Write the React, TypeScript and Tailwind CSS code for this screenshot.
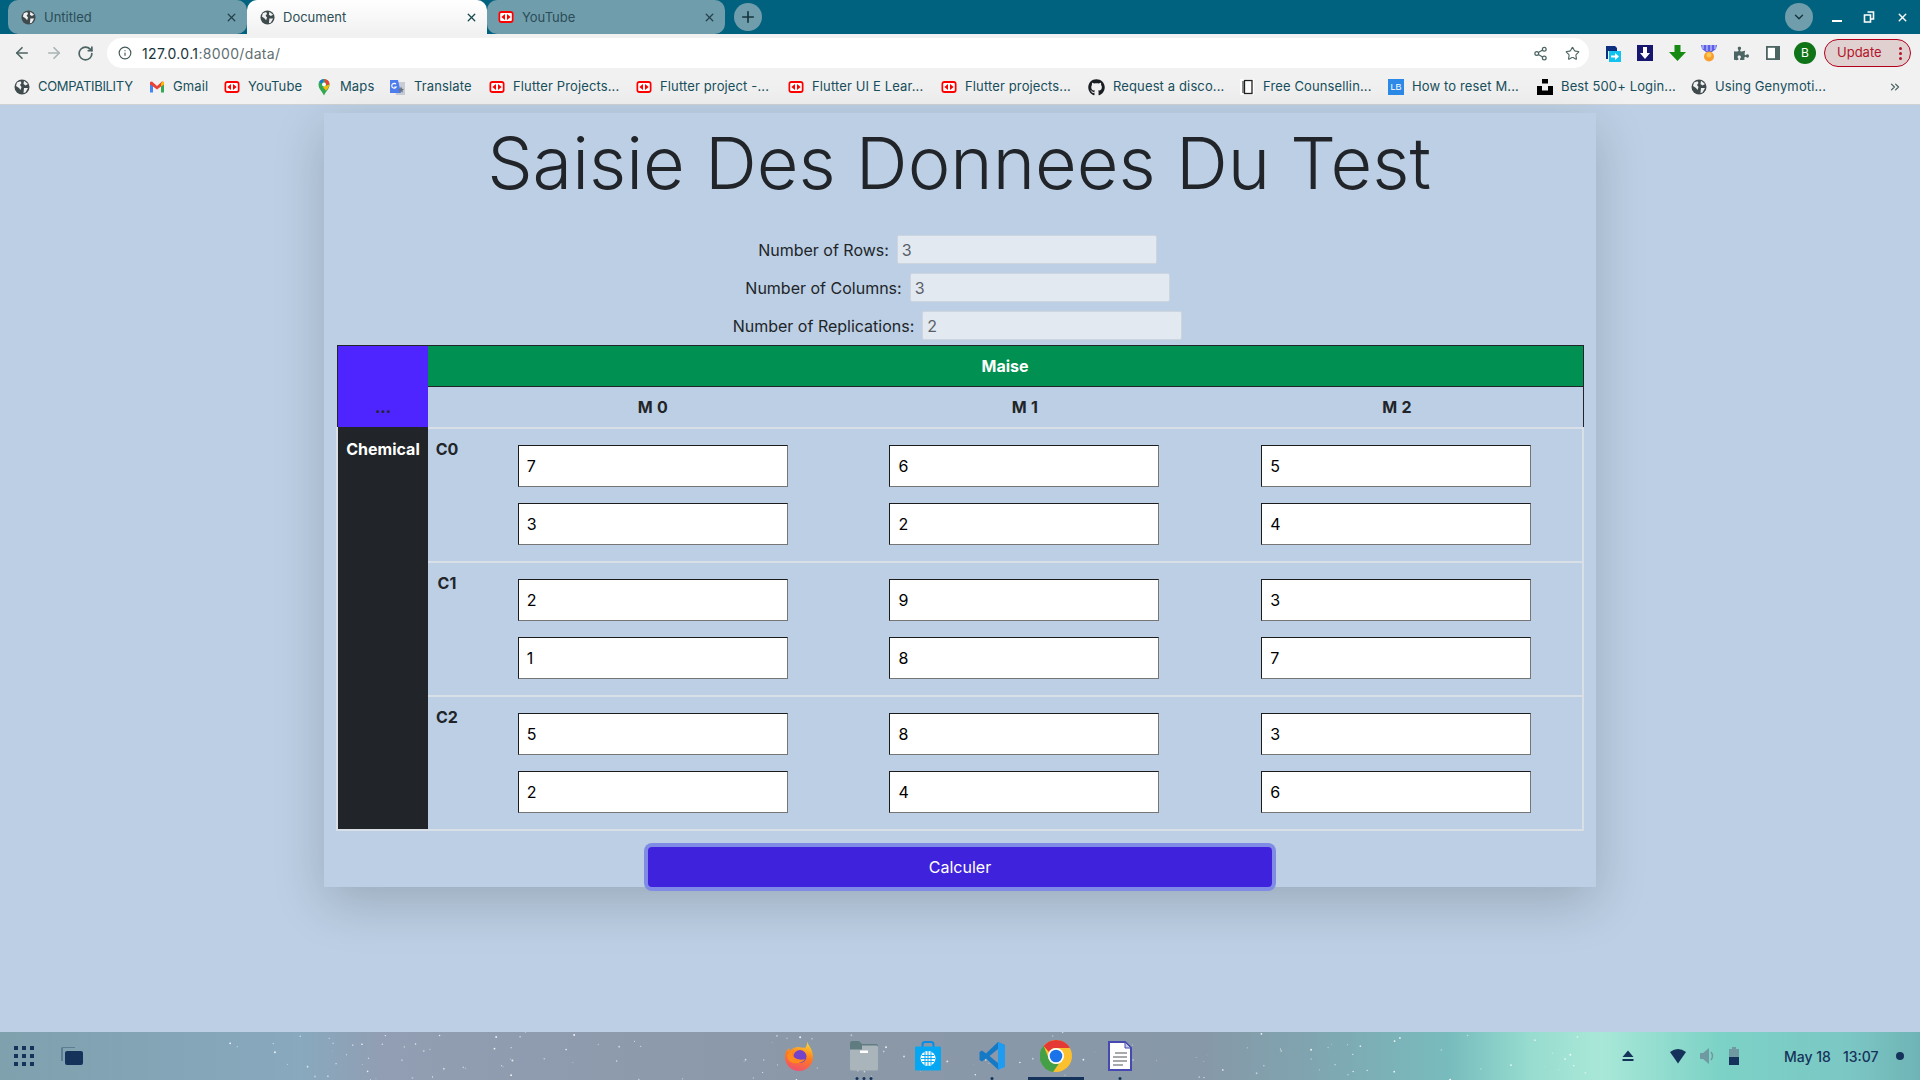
import React from "react";
import { ArrowLeft, ArrowRight, RotateCw, Info, Share2, Star, Plus, X, ChevronDown, ChevronsRight } from "lucide-react";
import { FaGithub, FaPuzzlePiece } from "react-icons/fa";

const Globe = ({ s = 16 }: { s?: number }) => (
  <svg width={s} height={s} viewBox="0 0 16 16" className="shrink-0">
    <circle cx="8" cy="8" r="7.5" fill="#3f4a4c" />
    <path d="M3 3.5 6.5 2.2 7.5 4 6 6 7.5 8 6.5 11 5 9 2 7ZM10 1.8 14 5 11.5 6.5 9.5 5ZM10 9h4l-2.5 4.5-2 .5Z" fill="#f1f1f1" />
  </svg>
);

const Yt = () => (
  <svg width="16" height="16" viewBox="0 0 16 16" className="shrink-0">
    <rect x="0.5" y="2" width="15" height="12" rx="3" fill="#f00" />
    <rect x="2.2" y="4" width="11.6" height="8" rx="1" fill="#fff" />
    <path d="M3.4 8 7 5V11ZM12.6 8 9 5V11Z" fill="#f00" />
  </svg>
);

const Gmail = () => (
  <svg width="16" height="16" viewBox="0 0 16 16" className="shrink-0">
    <path d="M1 3.5 V13.5 H4 V7Z" fill="#4285f4" />
    <path d="M15 3.5 V13.5 H12 V7Z" fill="#34a853" />
    <path d="M1 3 3 2.5 8 7 13 2.5 15 3 15 5.5 12 7.5 8 10.5 4 7.5 1 5.5Z" fill="#ea4335" />
    <path d="M12 4.4 13.4 2.6 15 3.2 15 5.5 12 7.5Z" fill="#fbbc04" />
  </svg>
);

const MapsPin = () => (
  <svg width="16" height="18" viewBox="0 0 16 18" className="shrink-0">
    <path d="M8 17.5C6 13 2.5 11 2.5 6.5A5.5 5.5 0 0 1 8 1 5.5 5.5 0 0 1 13.5 6.5C13.5 11 10 13 8 17.5Z" fill="#34a853" />
    <path d="M3.4 3.5A5.5 5.5 0 0 1 8 1L6 6Z" fill="#1a73e8" />
    <path d="M8 1A5.5 5.5 0 0 1 13.5 6.5L10 7Z" fill="#ea4335" />
    <path d="M13.4 6.5C13.2 9 11.5 10.8 10 12.7L7 9Z" fill="#fbbc04" />
    <circle cx="8" cy="6.5" r="2" fill="#fff" />
  </svg>
);

const Translate = () => (
  <svg width="17" height="17" viewBox="0 0 17 17" className="shrink-0">
    <path d="M5 3h11v13H7Z" fill="#c9ced6" />
    <path d="M1 1h8l3 13H1Z" fill="#4f7ef0" />
    <path d="M12 7.5l1 2.3 2 .3-1.5 1.4.4 2.1-1.9-1-1.9 1 .4-2.1L9 10.1l2-.3Z" fill="#6b7684" />
    <path d="M7 5.2A2.4 2.4 0 1 0 7.2 8H5.4" stroke="#fff" strokeWidth="1.1" fill="none" />
  </svg>
);

const FreeIcon = () => (
  <svg width="16" height="16" viewBox="0 0 16 16" className="shrink-0">
    <rect x="1" y="0" width="14" height="16" fill="#fff" />
    <rect x="3" y="2" width="3" height="12" fill="#8a8f91" />
    <rect x="5.5" y="1.5" width="7.5" height="13" fill="#fff" stroke="#222" strokeWidth="1.3" />
  </svg>
);

const Unsplash = () => (
  <svg width="16" height="16" viewBox="0 0 16 16" className="shrink-0">
    <path d="M5 0h6v4.5H5ZM0 7h5v4.5h6V7h5v9H0Z" fill="#000" />
  </svg>
);

const Lb = () => (
  <div className="w-4 h-4 shrink-0 bg-[#2d8ae8] text-white text-[9px] leading-4 text-center font-['Liberation_Sans',sans-serif]">LB</div>
);

const bookmarks: [React.ReactNode, string, string][] = [
  [<Globe />, "COMPATIBILITY", "w-[135px]"],
  [<Gmail />, "Gmail", "w-[75px]"],
  [<Yt />, "YouTube", "w-[92px]"],
  [<MapsPin />, "Maps", "w-[73px]"],
  [<Translate />, "Translate", "w-[100px]"],
  [<Yt />, "Flutter Projects...", "w-[147px]"],
  [<Yt />, "Flutter project -...", "w-[152px]"],
  [<Yt />, "Flutter UI E Lear...", "w-[153px]"],
  [<Yt />, "Flutter projects...", "w-[147px]"],
  [<FaGithub size={17} color="#1b1f23" className="shrink-0" />, "Request a disco...", "w-[151px]"],
  [<FreeIcon />, "Free Counsellin...", "w-[149px]"],
  [<Lb />, "How to reset M...", "w-[149px]"],
  [<Unsplash />, "Best 500+ Login...", "w-[154px]"],
  [<Globe />, "Using Genymoti...", "w-[150px]"],
];

const Tab = ({ icon, title, w, pad, active }: { icon: React.ReactNode; title: string; w: string; pad: string; active?: boolean }) => (
  <div
    className={`${w} ${pad} h-[34px] flex items-center pr-[9px] gap-[8px] text-[13px] ${
      active ? "bg-[linear-gradient(#ffffff,#f1f1f1)] rounded-t-[10px] text-[#2c4f55]" : "bg-[#6f9dab] rounded-[10px] text-[#2b4d58]"
    }`}
  >
    {icon}
    <span className="flex-1 truncate pt-[1px]">{title}</span>
    <X size={13} strokeWidth={2.4} color={active ? "#14474c" : "#24424c"} />
  </div>
);

const ExtArrowBlue = () => (
  <svg width="16" height="17" viewBox="0 0 16 17">
    <path d="M1 1h9l2 2v3H3v8H1Z" fill="#0d2f80" />
    <rect x="4" y="6" width="12" height="11" fill="#12c3ef" />
    <path d="M6 10.5h4V8l4 3.500-4 3.500v-2.500H6Z" fill="#fff" />
  </svg>
);
const ExtDown = () => (
  <svg width="16" height="16" viewBox="0 0 16 16">
    <rect width="16" height="16" fill="#17176f" />
    <path d="M6 2h4v6h3l-5 6-5-6h3Z" fill="#fff" />
  </svg>
);
const GreenDown = () => (
  <svg width="17" height="16" viewBox="0 0 17 16">
    <path d="M5.500 0h6v7H17l-8.500 9L0 7h5.500Z" fill="#168a12" />
  </svg>
);
const Medal = () => (
  <svg width="16" height="17" viewBox="0 0 16 17">
    <path d="M0 0h16l-1 4-4 3H5L1 4Z" fill="#5b5fe8" />
    <path d="M2 0v4M14 0v4M6 0v6M10 0v6" stroke="#c5c8f7" strokeWidth="1.2" />
    <circle cx="8" cy="11.500" r="5" fill="#fb9d2d" />
    <circle cx="8" cy="10" r="2.500" fill="#fcc957" />
  </svg>
);
const SidePanel = () => (
  <svg width="14" height="14" viewBox="0 0 14 14">
    <rect x="0.900" y="0.900" width="12.200" height="12.200" fill="#fff" stroke="#4c6562" strokeWidth="1.800" />
    <rect x="9" y="1" width="4" height="12" fill="#4c6562" />
  </svg>
);

const Firefox = () => (
  <svg width="30" height="30" viewBox="0 0 30 30" className="-translate-x-[1px]">
    <defs>
      <linearGradient id="ffa" x1="0.700" y1="0" x2="0.400" y2="1">
        <stop offset="0" stopColor="#fdd835" />
        <stop offset="0.500" stopColor="#ff7b1c" />
        <stop offset="1" stopColor="#f0506e" />
      </linearGradient>
    </defs>
    <path d="M23 0.500C25 6 29 8 29 16A14 14 0 0 1 1 16C1 12 2.500 9 5 7L6 10C8 7 12 6 14 6 17 6 20.500 7.500 21.500 6.500 22.500 5 23.500 3 23 0.500Z" fill="url(#ffa)" />
    <circle cx="16" cy="15.500" r="6.500" fill="#7543c9" />
    <path d="M3 14C5 10 8 8.500 12 9.500 9 10 8 12 8.500 14 10 17.500 16 20 21 18 18 23 10 23.500 6 20.500 4 19 3 16 3 14Z" fill="#ff8a1d" />
  </svg>
);
const Folder = () => (
  <svg width="30" height="30" viewBox="0 0 30 30">
    <path d="M1 2Q1 0 3 0h7l3 3h14q2 0 2 2v5H1Z" fill="#5f7c80" />
    <rect x="1" y="4.500" width="28" height="25" rx="1.500" fill="#a9b5ba" />
    <rect x="1" y="3.500" width="12" height="5" fill="#5f7c80" />
    <rect x="11" y="9.500" width="8" height="2.500" fill="#fff" />
  </svg>
);
const Store = () => (
  <svg width="30" height="30" viewBox="0 0 30 30">
    <path d="M9.500 7V3.500Q9.500 1 12 1h6q2.500 0 2.500 2.500V7" fill="none" stroke="#0c8be0" strokeWidth="2" />
    <rect x="2" y="5.500" width="26" height="24" rx="1" fill="#06a7f2" />
    <circle cx="15" cy="17.500" r="7.500" fill="#fff" />
    <path d="M9 14.500h12M8 17.500h14M9 20.500h12M12 11v13M15 10v15M18 11v13" stroke="#06a7f2" strokeWidth="1" />
  </svg>
);
const VSCode = () => (
  <svg width="30" height="30" viewBox="0 0 30 30">
    <path d="M21 1 28.200 4.200 21.500 29 9 17.500 5 20.500 2.500 19V11L5 9.500 9 12.500Z" fill="#0f78c7" opacity="0.950" />
    <path d="M21 8 12.500 15 21 22Z" fill="#8b98a8" />
    <path d="M21 1 28 4V26L21 29Z" fill="#1f9cf0" />
  </svg>
);
const ChromeIcon = () => (
  <svg width="32" height="32" viewBox="0 0 32 32">
    <circle cx="16" cy="16" r="16" fill="#fbc02d" />
    <path d="M16 0A16 16 0 0 1 29.900 8H16A8 8 0 0 0 9 12L3.600 6A16 16 0 0 1 16 0Z" fill="#e53935" />
    <path d="M3.600 5.700 9.300 20A8 8 0 0 0 19 23.500L13 32A16 16 0 0 1 3.600 5.700Z" fill="#43a047" />
    <circle cx="16" cy="16" r="8" fill="#fff" />
    <circle cx="16" cy="16" r="6.300" fill="#1a73e8" />
  </svg>
);
const WriterDoc = () => (
  <svg width="24" height="30" viewBox="0 0 24 30">
    <path d="M1 1h16l6 6v22H1Z" fill="#fff" stroke="#4549b0" strokeWidth="2" />
    <path d="M17 1l6 6h-6Z" fill="#c6c8e8" stroke="#4549b0" strokeWidth="1" />
    <path d="M7 12h12M5 16h14M5 20h14M5 24h10" stroke="#8a8d93" strokeWidth="1.400" />
  </svg>
);

const Stars = () => {
  const items: { x: number; y: number; r: number; o: number }[] = [];
  let seed = 17;
  const next = () => {
    seed = (seed * 16807) % 2147483647;
    return seed / 2147483647;
  };
  for (let i = 0; i < 140; i++) {
    items.push({ x: 230 + next() * 1360, y: next() * 48, r: 0.4 + next() * 0.6, o: 0.4 + next() * 0.6 });
  }
  return (
    <svg width="1920" height="48" className="absolute left-0 top-0 pointer-events-none">
      {items.map((s, i) => (
        <circle key={i} cx={s.x} cy={s.y} r={s.r} fill="#fff" opacity={s.o} />
      ))}
    </svg>
  );
};

const InfoInput = ({ label, value }: { label: string; value: string }) => (
  <div className="h-[29px] flex items-center justify-center gap-2 pr-[5px] text-[16px] text-[#212529]">
    <span>{label}</span>
    <input
      readOnly
      defaultValue={value}
      className="w-[260px] h-[29px] bg-[#e3e9f1] border border-[#cdd5de] rounded-[2px] pl-1 text-[16px] text-[#5a6068] outline-none"
    />
  </div>
);

const Cell = ({ v }: { v: string }) => (
  <input
    readOnly
    defaultValue={v}
    className="w-[270px] h-[42px] bg-white border border-t-[#1c1c1c] border-l-[#1c1c1c] border-r-[#767676] border-b-[#767676] pl-2 text-[16px] text-black outline-none"
  />
);

const rows: { name: string; cols: [string, string][] }[] = [
  { name: "C0", cols: [["7", "3"], ["6", "2"], ["5", "4"]] },
  { name: "C1", cols: [["2", "1"], ["9", "8"], ["3", "7"]] },
  { name: "C2", cols: [["5", "2"], ["8", "4"], ["3", "6"]] },
];

export default function App() {
  return (
    <div className="w-[1920px] h-[1080px] overflow-hidden flex flex-col bg-[#bccfe4] font-['Inter',sans-serif]">
      {/* tab strip */}
      <div className="h-[34px] shrink-0 bg-[#00627f] flex items-center pl-2">
        <Tab w="w-[239px]" pad="pl-[13px]" title="Untitled" icon={<Globe s={15} />} />
        <Tab w="w-[240px]" pad="pl-[13px]" title="Document" icon={<Globe s={15} />} active />
        <Tab w="w-[238px]" pad="pl-[11px]" title="YouTube" icon={<Yt />} />
        <div className="ml-[9px] w-[28px] h-[28px] rounded-full bg-[#6f9dab] flex items-center justify-center">
          <Plus size={18} strokeWidth={2.2} color="#16343c" />
        </div>
        <div className="ml-auto w-[28px] h-[28px] rounded-full bg-[#6f9dab] flex items-center justify-center mr-[9px]">
          <ChevronDown size={14} strokeWidth={2.4} color="#16343c" />
        </div>
        <div className="w-[98px] flex items-center justify-between pl-[10px] pr-[11px] text-white">
          <div className="w-[10px] h-[2px] bg-white mt-[7px]" />
          <svg width="12" height="12" viewBox="0 0 12 12">
            <path d="M4.500 1h6v7h-2.500M1.500 4h6v7h-6Z" stroke="#fff" strokeWidth="1.600" fill="none" />
          </svg>
          <X size={13} strokeWidth={2.6} color="#fff" />
        </div>
      </div>

      {/* toolbar */}
      <div className="h-[34px] shrink-0 bg-[#f1f1f1] flex items-start pt-1 pl-[13px]">
        <div className="h-[30px] flex items-center gap-[14px] text-[#4c6562]">
          <ArrowLeft size={18} strokeWidth={2.200} />
          <ArrowRight size={18} strokeWidth={2.200} color="#a9b4b3" />
          <RotateCw size={17} strokeWidth={2.400} />
        </div>
        <div className="ml-[13px] w-[1482px] h-[30px] bg-white rounded-full flex items-center pl-[11px] pr-[9px] text-[14px] tracking-[0.35px]">
          <Info size={14} strokeWidth={2} color="#425a58" />
          <span className="ml-[10px] text-[#17343a]">127.0.0.1</span>
          <span className="text-[#5f6f72]">:8000/data/</span>
          <Share2 size={15} strokeWidth={2} color="#4c6562" className="ml-auto" />
          <Star size={15} strokeWidth={1.800} color="#4c6562" className="ml-[17px]" />
        </div>
        <div className="h-[30px] flex items-center ml-[8px]">
          <div className="w-[32px] flex justify-center"><ExtArrowBlue /></div>
          <div className="w-[32px] flex justify-center"><ExtDown /></div>
          <div className="w-[32px] flex justify-center"><GreenDown /></div>
          <div className="w-[32px] flex justify-center"><Medal /></div>
          <div className="w-[32px] flex justify-center"><FaPuzzlePiece size={15} color="#4c6562" /></div>
          <div className="w-[32px] flex justify-center"><SidePanel /></div>
          <div className="w-[32px] flex justify-center">
            <div className="w-[22px] h-[22px] rounded-full bg-[#0f7417] text-white text-[12px] flex items-center justify-center">B</div>
          </div>
          <div className="ml-[3px] w-[87px] h-[28px] rounded-full border border-[#b3001b] bg-[#e0d0d0] flex items-center justify-between pl-[12px] pr-[8px] text-[13px] text-[#b3142a]">
            <span>Update</span>
            <span className="flex flex-col gap-[2px]">
              <i className="block w-[3px] h-[3px] rounded-full bg-[#b3142a]" />
              <i className="block w-[3px] h-[3px] rounded-full bg-[#b3142a]" />
              <i className="block w-[3px] h-[3px] rounded-full bg-[#b3142a]" />
            </span>
          </div>
        </div>
      </div>

      {/* bookmarks */}
      <div className="h-[37px] shrink-0 bg-[#f1f1f1] border-b border-[#cfd2d4] flex items-center pl-[14px] pt-[3px] pb-[1px] text-[13px] text-[#174f5c]">
        {bookmarks.map(([icon, label, w], i) => (
          <div key={i} className={`${w} shrink-0 flex items-center gap-[8px] whitespace-nowrap`}>
            {icon}
            <span className={i === 0 ? "tracking-[-0.3px]" : "tracking-[0.13px]"}>{label}</span>
          </div>
        ))}
        <ChevronsRight size={14} strokeWidth={2.200} color="#4c6562" className="ml-[47px]" />
      </div>

      {/* page */}
      <div className="flex-1 min-h-0 pt-[8px]">
        <div className="relative mx-auto w-[1272px] h-[774px] bg-[#bccfe4] shadow-[0_16px_48px_rgba(0,0,0,0.175)] flex flex-col">
          <h1 className="h-[101px] flex items-center justify-center pr-[2px] text-[72px] font-light text-[#212529] leading-none">
            Saisie Des Donnees Du Test
          </h1>
          <div className="mt-[22px] flex flex-col gap-[9px]">
            <InfoInput label="Number of Rows:" value="3" />
            <InfoInput label="Number of Columns:" value="3" />
            <InfoInput label="Number of Replications:" value="2" />
          </div>

          {/* table */}
          <div className="mt-[5px] ml-[12px] w-[1248px]">
            <div className="flex h-[82px] pl-[1px]">
              <div className="w-[91px] bg-[#4f25ff] border-t border-l border-[#212529] flex items-end justify-center pb-[8px] font-bold text-[16px] leading-6 text-[#212529]">
                ...
              </div>
              <div className="flex-1 flex flex-col">
                <div className="h-[42px] bg-[#009152] border-t border-r border-b border-[#212529] flex items-center justify-center pr-[1px] text-white font-bold text-[16px]">
                  Maise
                </div>
                <div className="h-[40px] border-r border-[#212529] flex pl-[39px] font-bold text-[16px] text-[#212529]">
                  {["M 0", "M 1", "M 2"].map((m) => (
                    <div key={m} className="w-[372px] flex items-center justify-center tracking-[0.3px]">
                      {m}
                    </div>
                  ))}
                </div>
              </div>
            </div>
            <div className="flex border-x-2 border-b-2 border-[#d9dfe6]">
              <div className="w-[90px] shrink-0 bg-[#212529] pt-[10px] text-center text-white font-bold text-[16px] leading-6">
                Chemical
              </div>
              <div className="flex-1 min-w-0">
                {rows.map((r) => (
                  <div key={r.name} className="h-[134px] border-t-2 border-[#d9dfe6] flex">
                    <div className="w-[39px] pt-2 pr-[1px] text-center font-bold text-[16px] leading-6 text-[#212529]">{r.name}</div>
                    {r.cols.map((c, i) => (
                      <div key={i} className="w-[372px] flex flex-col items-center justify-center gap-4">
                        <Cell v={c[0]} />
                        <Cell v={c[1]} />
                      </div>
                    ))}
                  </div>
                ))}
              </div>
            </div>
          </div>

          <button className="mt-[16px] mx-auto w-[624px] h-[40px] rounded-[4px] bg-[#3f22dc] text-white text-[16px] ring-4 ring-[#7f8be4]">
            Calculer
          </button>
        </div>
      </div>

      {/* taskbar */}
      <div className="relative h-[48px] shrink-0 flex items-center text-[#15335a] bg-[linear-gradient(90deg,#7fa0ad_0px,#88a9be_300px,#919eb3_380px,#8b98a8_800px,#8798a8_1200px,#80a3af_1300px,#78bcbe_1450px,#97dccf_1530px,#a9e8d8_1600px,#7cd2c6_1720px,#7bc7c4_1850px,#6fb3b6_1920px)]">
        <Stars />
        <div className="relative w-[768px] h-full flex items-center pl-[14px]">
          <div className="grid grid-cols-3 gap-x-[4px] gap-y-[4px] w-[20px]">
            {Array.from({ length: 9 }).map((_, i) => (
              <i key={i} className="block w-[4px] h-[4px] bg-[#15335a]" />
            ))}
          </div>
          <svg width="22" height="18" viewBox="0 0 22 18" className="ml-[27px]">
            <path d="M0 4V1.500Q0 0 1.500 0H14V1H2V14H0Z" fill="#5d7d93" />
            <rect x="4" y="4" width="18" height="14" rx="2" fill="#15335a" />
          </svg>
        </div>
        {[<Firefox />, <Folder />, <Store />, <VSCode />, <ChromeIcon />, <WriterDoc />].map((ic, i) => (
          <div key={i} className="relative w-[64px] h-full flex items-center justify-center">
            {ic}
            {i === 1 && (
              <div className="absolute bottom-[0px] left-1/2 -translate-x-1/2 flex gap-[4px]">
                <i className="block w-[3px] h-[3px] rounded-full bg-[#15335a]" />
                <i className="block w-[3px] h-[3px] rounded-full bg-[#15335a]" />
                <i className="block w-[3px] h-[3px] rounded-full bg-[#15335a]" />
              </div>
            )}
            {(i === 3 || i === 5) && (
              <i className="absolute bottom-0 left-1/2 -translate-x-1/2 block w-[3px] h-[3px] rounded-full bg-[#15335a]" />
            )}
            {i === 4 && <i className="absolute bottom-0 left-[4px] block w-[56px] h-[3px] bg-[#15335a]" />}
          </div>
        ))}
        <div className="relative flex-1 h-full flex items-center pl-[470px]">
          <svg width="12" height="12" viewBox="0 0 12 12" className="shrink-0">
            <path d="M6 0.500 11.500 7H0.500ZM0.500 9H11.500V11H0.500Z" fill="#15335a" />
          </svg>
          <svg width="18" height="16" viewBox="0 0 18 16" className="ml-[35px] shrink-0">
            <path d="M1 4Q9-2 17 4L9 15.500Z" fill="#15335a" />
          </svg>
          <svg width="16" height="18" viewBox="0 0 16 18" className="ml-[13px] shrink-0">
            <path d="M0 6h3l6-5v16l-6-5H0Z" fill="#6f9aa2" />
            <path d="M11 5Q14 9 11 13" stroke="#6f9aa2" strokeWidth="1.500" fill="none" />
          </svg>
          <svg width="10" height="18" viewBox="0 0 10 18" className="ml-[13px] shrink-0">
            <rect y="2" width="10" height="16" fill="#6f9aa2" />
            <rect x="3" width="4" height="2" fill="#6f9aa2" />
            <rect y="10" width="10" height="8" fill="#15335a" />
          </svg>
          <span className="ml-[45px] text-[14px] font-medium whitespace-nowrap">May 18</span>
          <span className="ml-[12px] text-[14px] font-medium whitespace-nowrap">13:07</span>
          <i className="block ml-[17px] w-[8px] h-[8px] rounded-full bg-[#15335a] shrink-0" />
        </div>
      </div>
    </div>
  );
}
